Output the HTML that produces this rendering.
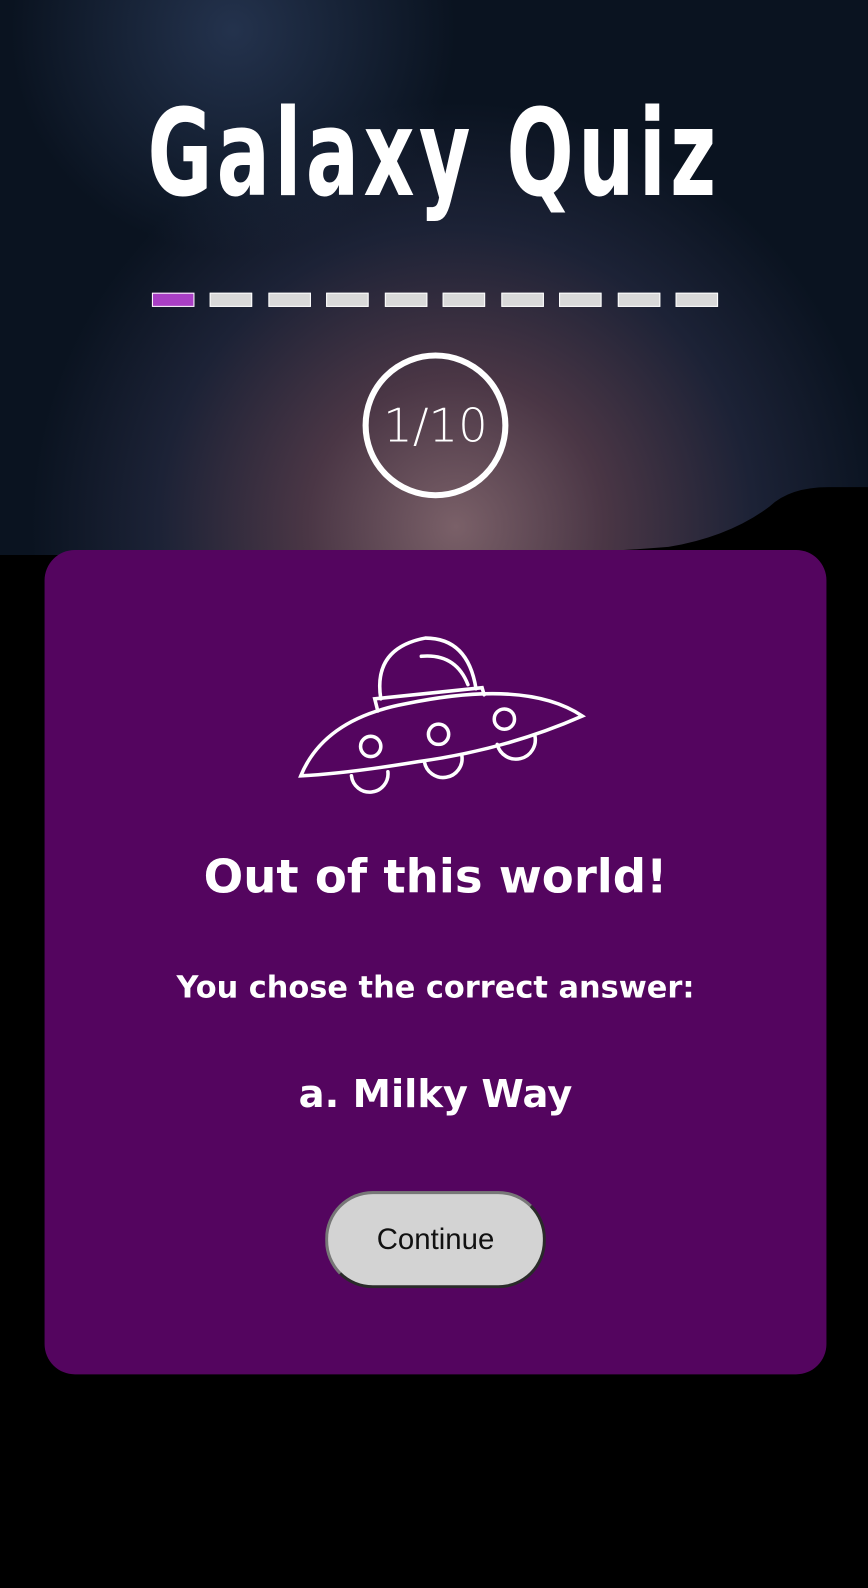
<!DOCTYPE html>
<html><head><meta charset="utf-8"><style>
html,body{margin:0;padding:0;background:#000;width:868px;height:1588px;overflow:hidden}
#w{position:absolute;left:0;top:0;width:857px;height:1568px;transform:scale(1.0128);transform-origin:0 0;font-family:"Liberation Sans",sans-serif}
.title{position:absolute;left:0;width:857px;top:92px;text-align:center;color:#fff;font-family:"DejaVu Sans",sans-serif;font-weight:bold;font-size:110px;line-height:110px;letter-spacing:6px;white-space:nowrap;transform:scaleX(0.71) scaleY(1.08);transform-origin:50% 0}
.bar{position:absolute;top:289px;width:40px;height:12px;background:#d9d9d9;border:1px solid #fff}
.circ{position:absolute;left:358px;top:348px;width:132px;height:132px;border:6px solid #fff;border-radius:50%;color:#fff;font-size:46px;text-align:center;line-height:132px;font-family:"DejaVu Sans",sans-serif;font-weight:300}
.card{position:absolute;left:44px;top:543px;width:772px;height:814px;background:#54055f;border-radius:30px}
.t{position:absolute;left:44px;width:772px;text-align:center;color:#fff;font-weight:bold;font-family:"DejaVu Sans",sans-serif}
.btn{position:absolute;left:321px;top:1176px;width:212px;height:90px;background:#d3d3d3;border:3px solid #2a2a2a;border-left-color:#777;border-top-color:#777;border-radius:47px;font-size:29px;color:#111;text-align:center;line-height:90px}
</style></head><body><div id="w">
<svg width="857" height="560" style="position:absolute;left:0;top:0">
<defs>
<radialGradient id="g1" cx="450" cy="520" r="420" gradientUnits="userSpaceOnUse"><stop offset="0" stop-color="#7a6068"/><stop offset="0.35" stop-color="#4a3645"/><stop offset="0.7" stop-color="#1c2236"/><stop offset="1" stop-color="#0a1320"/></radialGradient>
<radialGradient id="g2" cx="230" cy="30" r="220" gradientUnits="userSpaceOnUse"><stop offset="0" stop-color="#2a3a58" stop-opacity="0.8"/><stop offset="1" stop-color="#2a3a58" stop-opacity="0"/></radialGradient>
</defs>
<path d="M0 0H857V481H818Q780 481 760 500Q720 530 660 540Q560 548 450 548L0 548Z" fill="url(#g1)"/>
<path d="M0 0H857V481H818Q780 481 760 500Q720 530 660 540Q560 548 450 548L0 548Z" fill="url(#g2)"/>
</svg>
<div class="title">Galaxy Quiz</div>
<div class="bar" style="left:150px;background:#a93fc5"></div>
<div class="bar" style="left:207px"></div><div class="bar" style="left:265px"></div><div class="bar" style="left:322px"></div><div class="bar" style="left:380px"></div><div class="bar" style="left:437px"></div><div class="bar" style="left:495px"></div><div class="bar" style="left:552px"></div><div class="bar" style="left:610px"></div><div class="bar" style="left:667px"></div>
<div class="circ">1/10</div>
<div class="card"></div>
<svg width="857" height="1568" style="position:absolute;left:0;top:0" fill="none" stroke="#fff" stroke-width="3.5" stroke-linecap="round">
<path d="M376 690Q368 640 420 630Q462 630 470 680"/>
<path d="M416 648Q450 645 462 676"/>
<path d="M373 702L370 690L476 679L478 686"/>
<path d="M297 766Q320 710 400 695Q520 670 575 707Q500 740 413 752Q340 764 297 766Z"/>
<circle cx="366" cy="737" r="10"/><circle cx="433" cy="725" r="10"/><circle cx="498" cy="710" r="10"/>
<path d="M347 766A18 18 0 0 0 383 762"/>
<path d="M419 752A18 18 0 0 0 456 746"/>
<path d="M491 735A18 18 0 0 0 528 726"/>
</svg>
<div class="t" style="top:838px;font-size:46px">Out of this world!</div>
<div class="t" style="top:958px;font-size:30px">You chose the correct answer:</div>
<div class="t" style="top:1058px;font-size:38px">a. Milky Way</div>
<div class="btn">Continue</div>
</div></body></html>
